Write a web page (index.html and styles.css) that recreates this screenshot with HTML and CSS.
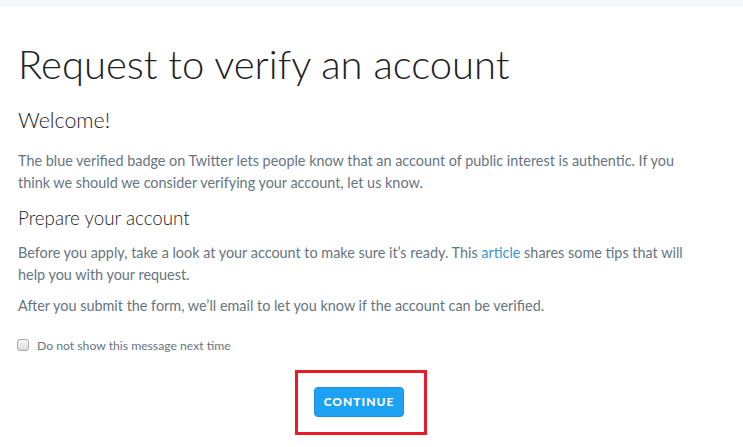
FILE: index.html
```html
<!DOCTYPE html>
<html>
<head>
<meta charset="utf-8">
<link rel="stylesheet" href="styles.css">
</head>
<body>
<div class="topbar"></div>
<main class="content">
  <h1 class="title">Request to verify an account</h1>
  <h2 class="h-welcome">Welcome!</h2>
  <p class="text text-first">The blue verified badge on Twitter lets people know that an account of public interest is authentic. If you think we should we consider verifying your account, let us know.</p>
  <h3 class="h-prepare">Prepare your account</h3>
  <p class="text text-prepare"><span>Before you apply, take a look at your account to make sure it’s ready. This </span><a class="link" href="#">article</a><span> shares some tips that will</span><br><span>help you with your request.</span></p>
  <p class="text text-after">After you submit the form, we’ll email to let you know if the account can be verified.</p>
  <label class="check">
    <span class="box"></span>
    <span class="check-label">Do not show this message next time</span>
  </label>
  <div class="actions">
    <div class="highlight">
      <button class="btn" type="button">CONTINUE</button>
    </div>
  </div>
</main>
</body>
</html>
```
FILE: styles.css
```css
html, body {
  margin: 0;
  padding: 0;
  background: #ffffff;
}
body {
  font-family: Lato, "Open Sans", sans-serif;
  color: #66757f;
}
.topbar {
  height: 7px;
  background: #f5f8fa;
}
.content {
  padding: 0 18px;
  width: 680px;
}
.title {
  margin: 33px 0 0 0;
  font-weight: 300;
  font-size: 40px;
  line-height: 48px;
  color: #1c2226;
}
.h-welcome {
  margin: 19px 0 0 0;
  font-weight: 300;
  font-size: 21.4px;
  line-height: 26px;
  color: #1c2226;
}
.text {
  margin: 0;
  font-size: 14.4px;
  line-height: 21.5px;
  color: #66757f;
}
.text-first {
  margin-top: 17px;
}
.h-prepare {
  margin: 13px 0 0 0;
  font-weight: 300;
  font-size: 18.8px;
  line-height: 24px;
  color: #1c2226;
}
.text-prepare {
  margin-top: 12px;
}
.text-after {
  margin-top: 10px;
}
.link {
  color: #3b94d9;
  text-decoration: none;
}
.check {
  display: flex;
  align-items: center;
  gap: 8px;
  margin-top: 21px;
  margin-left: -1px;
}
.box {
  width: 10px;
  height: 10px;
  border: 1px solid #a9a9a9;
  border-radius: 3px;
  background: linear-gradient(#f6f6f6, #dddddd);
}
.check-label {
  font-size: 12.2px;
  color: #66757f;
}
.actions {
  display: flex;
  justify-content: center;
  margin-top: 17px;
}
.highlight {
  border: 3px solid #e81c24;
  padding: 14px 20px 15px 16px;
  margin-left: 6px;
}
.btn {
  display: block;
  width: 90px;
  height: 30px;
  border: 1px solid #1a91da;
  border-radius: 4px;
  background: #1da1f2;
  color: #fff;
  font-family: Lato, sans-serif;
  font-weight: 900;
  font-size: 12px;
  letter-spacing: 1px;
  padding: 0;
}
```
